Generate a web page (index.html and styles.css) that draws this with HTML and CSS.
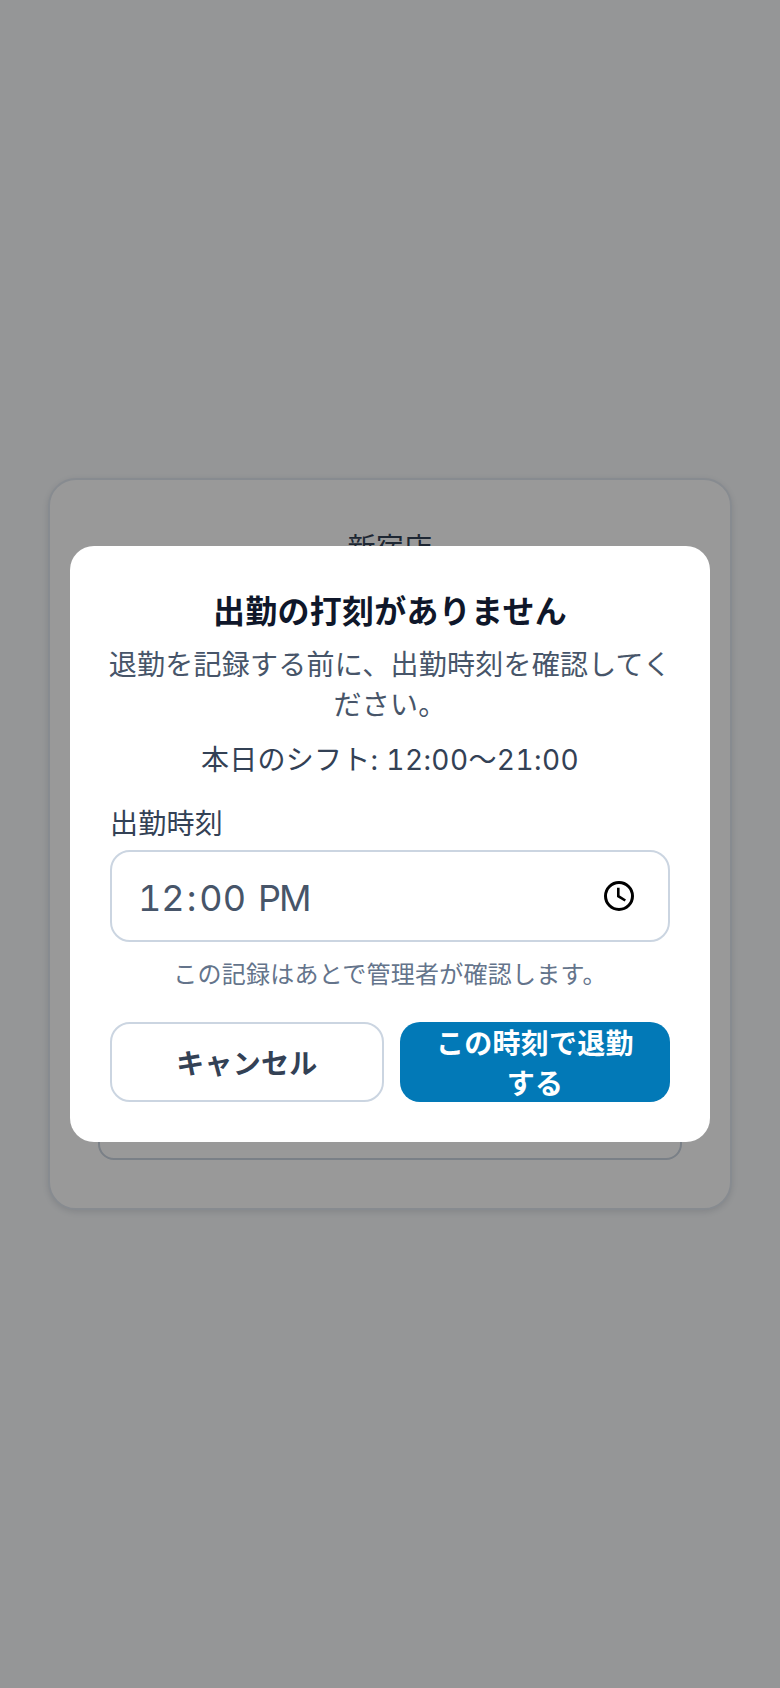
FILE: index.html
```html
<!DOCTYPE html>
<html lang="ja">
<head>
<meta charset="utf-8">
<title>出勤の打刻がありません</title>
<link rel="stylesheet" href="styles.css">
</head>
<body>
<main class="page">
  <section class="card">
    <h2 class="store">新宿店</h2>
    <div class="card-action"></div>
  </section>
</main>
<div class="overlay">
  <div class="dialog" role="dialog">
    <h1 class="title">出勤の打刻がありません</h1>
    <p class="desc">退勤を記録する前に、出勤時刻を確認してください。</p>
    <p class="shift">本日のシフト<span class="num">: 12:00〜21:00</span></p>
    <div class="label">出勤時刻</div>
    <div class="time-field">
      <span class="time-value"><span>12</span><span class="colon">:</span><span>00</span><span class="ampm">PM</span></span>
      <svg class="clock" viewBox="0 0 36 36" width="36" height="36" aria-hidden="true">
        <circle cx="18" cy="18" r="13.5" fill="none" stroke="#000" stroke-width="3"/>
        <path d="M17.3 9.8V18.2L24.3 22.5" fill="none" stroke="#000" stroke-width="2.6"/>
      </svg>
    </div>
    <p class="note">この記録はあとで管理者が確認します。</p>
    <div class="actions">
      <button class="btn btn-cancel">キャンセル</button>
      <button class="btn btn-primary">この時刻で退勤する</button>
    </div>
  </div>
</div>
</body>
</html>
```
FILE: styles.css
```css
* { box-sizing: border-box; }
html, body { margin: 0; height: 100%; }
body {
  background: #f8fafc;
  font-family: "Inter", "Noto Sans CJK JP", sans-serif;
  font-feature-settings: "tnum";
  letter-spacing: .25px;
  color: #334155;
}
.page {
  height: 1688px;
  display: flex;
  align-items: center;
  justify-content: center;
}
.card {
  width: 684px;
  height: 732px;
  background: #fff;
  border: 2px solid #e2e8f0;
  border-radius: 28px;
  box-shadow: 0 2px 6px rgba(15, 23, 42, .12);
  padding: 48px;
  display: flex;
  flex-direction: column;
  justify-content: space-between;
}
.store {
  margin: 0;
  font-size: 28px;
  font-weight: 400;
  line-height: 40px;
  text-align: center;
  color: #334155;
}
.card-action {
  height: 80px;
  border: 2px solid #cbd5e1;
  border-radius: 16px;
}
.overlay {
  position: fixed;
  inset: 0;
  background: rgba(0, 0, 0, .4);
  display: flex;
  align-items: center;
  justify-content: center;
}
.dialog {
  width: 640px;
  height: 596px;
  background: #fff;
  border-radius: 24px;
  padding: 40px;
}
.title {
  margin: 0;
  font-size: 32px;
  font-weight: 700;
  line-height: 52px;
  text-align: center;
  color: #0f172a;
}
.desc {
  margin: 7px -4px 0;
  font-size: 28px;
  line-height: 40px;
  text-align: center;
  color: #475569;
}
.shift {
  margin: 15px 0 0;
  font-size: 28px;
  line-height: 40px;
  text-align: center;
  color: #334155;
}
.num { letter-spacing: .4px; }
.label {
  margin-top: 24px;
  font-size: 28px;
  line-height: 40px;
  color: #334155;
}
.time-field {
  margin-top: 6px;
  height: 92px;
  border: 2px solid #cbd5e1;
  border-radius: 20px;
  padding: 0 31px 0 26px;
  display: flex;
  align-items: center;
  justify-content: space-between;
}
.time-value {
  padding-top: 4px;
  font-size: 36px;
  font-weight: 400;
  letter-spacing: 0;
  color: #475569;
  display: flex;
}
.colon { margin: 0 3px 0 2px; }
.ampm { margin-left: 12px; letter-spacing: -2px; }
.clock { display: block; }
.note {
  margin: 15px 0 0;
  font-size: 24px;
  line-height: 36px;
  text-align: center;
  color: #64748b;
}
.actions {
  margin-top: 29px;
  display: grid;
  grid-template-columns: 274fr 270fr;
  gap: 16px;
}
.btn {
  height: 80px;
  border-radius: 20px;
  font-family: inherit;
  font-size: 28px;
  font-weight: 700;
  letter-spacing: .25px;
  line-height: 40px;
  padding: 0 24px;
}
.btn-cancel {
  padding-top: 4px;
  background: #fff;
  border: 2px solid #cbd5e1;
  color: #334155;
}
.btn-primary {
  padding-top: 2px;
  background: #0279b7;
  border: 0;
  color: #fff;
}
```
